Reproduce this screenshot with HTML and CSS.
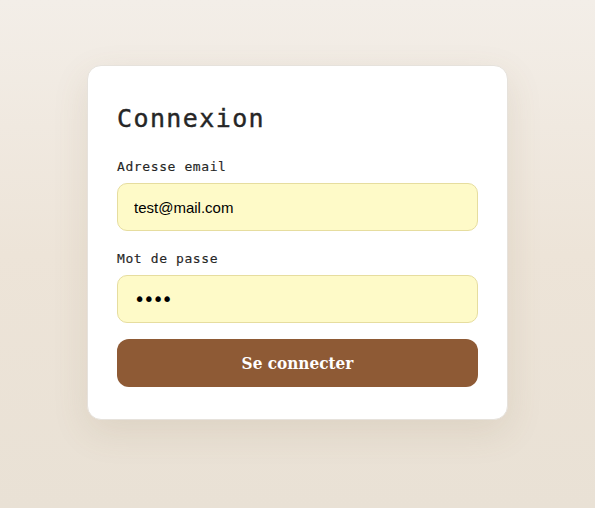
FILE: index.html
```html
<!DOCTYPE html>
<html lang="fr">
<head>
<meta charset="utf-8">
<title>Connexion</title>
<link rel="stylesheet" href="styles.css">
</head>
<body>
<main class="page">
  <section class="card">
    <h1 class="title">Connexion</h1>
    <form class="form">
      <div class="field">
        <label class="label" for="email">Adresse email</label>
        <input class="input" id="email" type="email" value="test@mail.com">
      </div>
      <div class="field">
        <label class="label" for="pw">Mot de passe</label>
        <input class="input input-pw" id="pw" type="password" value="test">
      </div>
      <button class="btn" type="button">Se connecter</button>
    </form>
  </section>
</main>
</body>
</html>
```

FILE: styles.css
```css
* { box-sizing: border-box; }
html, body { margin: 0; height: 100%; }
body {
  background: linear-gradient(180deg, #f3eee8 0%, #ede4d8 50%, #e9e1d5 100%);
  font-family: "DejaVu Sans Mono", monospace;
  color: #2a2a2a;
}
.page {
  display: flex;
  justify-content: center;
  padding-top: 65px;
}
.card {
  width: 421px;
  background: #fff;
  border: 1px solid #e6e2dc;
  border-radius: 14px;
  box-shadow: 0 12px 36px rgba(120, 95, 60, 0.12);
  padding: 38px 29px 32px;
}
.title {
  margin: 0 0 25px;
  font-family: "DejaVu Sans Mono", monospace;
  font-weight: normal;
  font-size: 25px;
  letter-spacing: 1.4px;
  line-height: 30px;
  color: #262626;
  -webkit-text-stroke: 0.4px #262626;
}
.form {
  display: flex;
  flex-direction: column;
  gap: 16px;
}
.field { display: flex; flex-direction: column; }
.field + .field { margin-top: 4px; }
.label {
  font-family: "DejaVu Sans Mono", monospace;
  font-size: 13px;
  letter-spacing: 0.6px;
  line-height: 16px;
  margin-bottom: 8px;
  color: #262626;
  -webkit-text-stroke: 0.15px #262626;
}
.input {
  height: 48px;
  width: 100%;
  background: #fefac8;
  border: 1px solid #e6dd9f;
  border-radius: 10px;
  padding: 0 16px;
  font-family: "Liberation Sans", Arial, sans-serif;
  font-size: 15px;
  color: #000;
  outline: none;
}
.input-pw {
  font-family: "DejaVu Sans", sans-serif;
  font-size: 19px;
  letter-spacing: -2px;
}
.btn {
  height: 48px;
  width: 100%;
  border: none;
  border-radius: 12px;
  background: #8e5a35;
  color: #fff;
  font-family: "DejaVu Serif Condensed", "DejaVu Serif", serif;
  font-weight: bold;
  font-size: 17px;
  cursor: pointer;
}
```
